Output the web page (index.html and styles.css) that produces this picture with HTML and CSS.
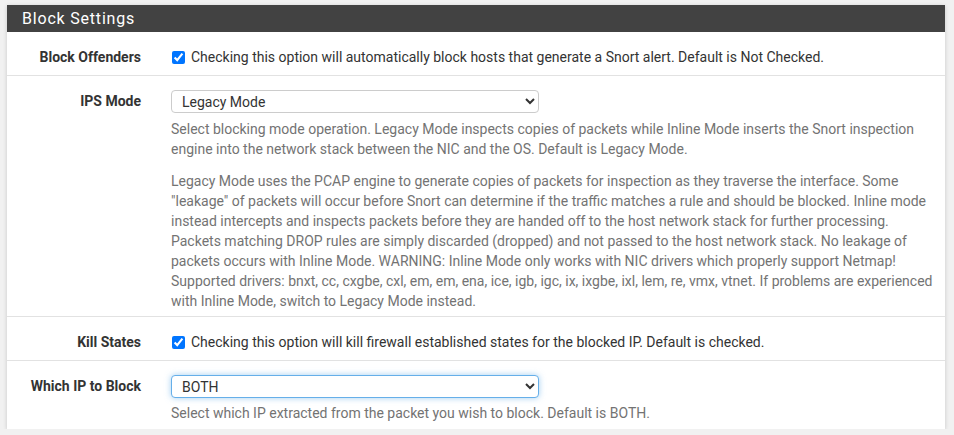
FILE: index.html
```html
<!DOCTYPE html>
<html>
<head>
<meta charset="utf-8">
<link rel="stylesheet" href="styles.css">
</head>
<body>
<div class="panel">
  <div class="panel-heading">Block Settings</div>
  <div class="row check-row">
    <div class="label">Block Offenders</div>
    <div class="content">
      <label class="check"><input type="checkbox" checked> Checking this option will automatically block hosts that generate a Snort alert. Default is Not Checked.</label>
    </div>
  </div>
  <div class="row">
    <div class="label">IPS Mode</div>
    <div class="content">
      <select class="sel"><option>Legacy Mode</option></select>
      <p class="help">Select blocking mode operation. Legacy Mode inspects copies of packets while Inline Mode inserts the Snort inspection engine into the network stack between the NIC and the OS. Default is Legacy Mode.</p>
      <p class="help">Legacy Mode uses the PCAP engine to generate copies of packets for inspection as they traverse the interface. Some "leakage" of packets will occur before Snort can determine if the traffic matches a rule and should be blocked. Inline mode instead intercepts and inspects packets before they are handed off to the host network stack for further processing. Packets matching DROP rules are simply discarded (dropped) and not passed to the host network stack. No leakage of packets occurs with Inline Mode. WARNING: Inline Mode only works with NIC drivers which properly support Netmap! Supported drivers: bnxt, cc, cxgbe, cxl, em, em, ena, ice, igb, igc, ix, ixgbe, ixl, lem, re, vmx, vtnet. If problems are experienced with Inline Mode, switch to Legacy Mode instead.</p>
    </div>
  </div>
  <div class="row check-row">
    <div class="label">Kill States</div>
    <div class="content">
      <label class="check"><input type="checkbox" checked> Checking this option will kill firewall established states for the blocked IP. Default is checked.</label>
    </div>
  </div>
  <div class="row last">
    <div class="label">Which IP to Block</div>
    <div class="content">
      <select class="sel focus"><option>BOTH</option></select>
      <p class="help tight">Select which IP extracted from the packet you wish to block. Default is BOTH.</p>
    </div>
  </div>
</div>
</body>
</html>
```
FILE: styles.css
```css
html, body {
  margin: 0;
  background: #f1f1f1;
}
body {
  padding: 5px 9px 0 7px;
  font-family: Roboto, "Noto Sans", sans-serif;
  font-size: 14px;
  color: #212121;
}
.panel {
  background: #fff;
  box-shadow: 0 1px 4px rgba(0, 0, 0, 0.18);
}
.panel-heading {
  background: #424242;
  color: #fff;
  height: 27px;
  line-height: 27px;
  padding-left: 15px;
  font-size: 16px;
  font-weight: 400;
  letter-spacing: 0.8px;
}
.row {
  display: grid;
  grid-template-columns: 149px 1fr;
  border-bottom: 1px solid #e2e2e2;
  padding: 14px 0 5px;
}
.row.check-row {
  padding: 15px 0 8px;
}
.row.last {
  border-bottom: none;
  padding-bottom: 6px;
}
.label {
  text-align: right;
  padding-right: 15px;
  font-weight: 700;
  color: #333;
  line-height: 20px;
  padding-top: 1px;
}
.check-row .label {
  padding-top: 0;
}
.content {
  padding-left: 15px;
  padding-right: 10px;
  line-height: 20px;
}
.check {
  display: flex;
  align-items: center;
  gap: 6px;
  color: #333;
}
.check input {
  margin: 0 0 0 1px;
  width: 13px;
  height: 13px;
}
.sel {
  display: block;
  width: 368px;
  height: 23px;
  margin: 0;
  font-family: Roboto, sans-serif;
  font-size: 14px;
  color: #333;
  background: #fff;
  border: 1px solid #ccc;
  border-radius: 4px;
  padding: 0 6px;
}
.sel.focus {
  border-color: #66afe9;
  box-shadow: 0 0 6px rgba(102, 175, 233, 0.6);
  outline: none;
}
.help {
  margin: 6px 0 0;
  color: #737373;
}
.help.tight {
  margin-top: 5px;
}
.help + .help {
  margin-top: 12px;
}
```
